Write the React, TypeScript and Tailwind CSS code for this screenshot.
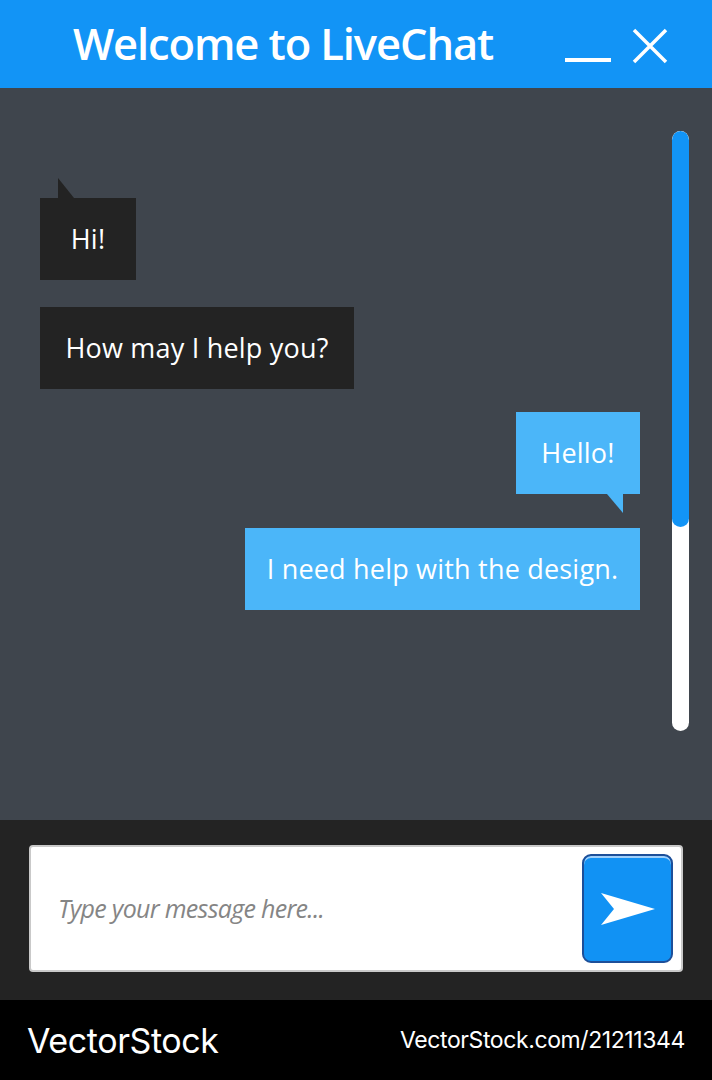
type Msg = { text: string; side: "left" | "right"; width: string; tail?: "top" | "bottom" };

const messages: Msg[] = [
    { text: "Hi!", side: "left", width: "w-[96px]", tail: "top" },
    { text: "How may I help you?", side: "left", width: "w-[314px]" },
    { text: "Hello!", side: "right", width: "w-[124px]", tail: "bottom" },
    { text: "I need help with the design.", side: "right", width: "w-[395px]" },
];

const font = "font-['Open_Sans',sans-serif]";

function Bubble({ msg }: { msg: Msg }) {
    const left = msg.side === "left";
    const color = left ? "bg-[#232323]" : "bg-[#4bb6f9]";
    return (
        <div className={`flex flex-col ${left ? "items-start" : "items-end"}`}>
            {msg.tail === "top" && (
                <svg width="16" height="20" viewBox="0 0 16 20" className="ml-[18px] block">
                    <polygon points="0,0 0,20 16,20" fill="#232323" />
                </svg>
            )}
            <div
                className={`${color} ${msg.width} h-[82px] flex items-center justify-center text-white text-[27px] tracking-[0.2px] whitespace-nowrap ${font}`}
            >
                {msg.text}
            </div>
            {msg.tail === "bottom" && (
                <svg width="16" height="19" viewBox="0 0 16 19" className="mr-[17px] block">
                    <polygon points="0,0 16,0 16,19" fill="#4bb6f9" />
                </svg>
            )}
        </div>
    );
}

export default function App() {
    return (
        <div className="w-[712px] h-[1080px] flex flex-col overflow-hidden">
            <header className="h-[88px] bg-[#1294f6] flex items-center pl-[73px] pr-[44px]">
                <h1 className={`text-white text-[43.5px] font-semibold tracking-[-1.1px] leading-none ${font}`}>
                    Welcome to LiveChat
                </h1>
                <div className="ml-auto flex items-end gap-[21px] pt-[4px]">
                    <div className="w-[46px] h-[4px] bg-white mb-[2px]" />
                    <svg width="36" height="36" viewBox="0 0 36 36">
                        <path d="M2 2 L34 34 M34 2 L2 34" stroke="white" strokeWidth="3.5" />
                    </svg>
                </div>
            </header>

            <main className="flex-1 bg-[#3f454d] flex pl-[40px]">
                <div className="w-[600px] pt-[90px] flex flex-col">
                    <Bubble msg={messages[0]} />
                    <div className="h-[27px]" />
                    <Bubble msg={messages[1]} />
                    <div className="h-[23px]" />
                    <Bubble msg={messages[2]} />
                    <div className="h-[15px]" />
                    <Bubble msg={messages[3]} />
                </div>
                <div className="ml-[32px] pt-[43px]">
                    <div className="w-[17px] h-[600px] rounded-full bg-white flex flex-col overflow-hidden">
                        <div className="h-[396px] bg-[#1294f6] rounded-full" />
                    </div>
                </div>
            </main>

            <section className="h-[180px] bg-[#232323] px-[29px] pt-[25px]">
                <div className="h-[127px] bg-white border-2 border-[#c9c9c9] rounded-[4px] flex items-center pl-[27px] pr-[8px]">
                    <span className={`flex-1 text-[#858585] italic text-[25px] tracking-[-0.7px] ${font}`}>
                        Type your message here...
                    </span>
                    <button className="w-[91px] h-[109px] bg-[#1192f4] border-2 border-[#1d4f99] rounded-[9px] shadow-[inset_0_2px_0_#9fd0fb] flex items-center justify-center">
                        <svg width="54" height="32" viewBox="0 0 54 32">
                            <polygon points="0,0 54,16 0,32 13,16" fill="white" />
                        </svg>
                    </button>
                </div>
            </section>

            <footer className="h-[80px] bg-black flex items-center justify-between px-[27px] text-white font-['Inter',sans-serif]">
                <span className="text-[34px] tracking-[-0.4px]">VectorStock</span>
                <span className="text-[23px] tracking-[-0.4px]">VectorStock.com/21211344</span>
            </footer>
        </div>
    );
}
